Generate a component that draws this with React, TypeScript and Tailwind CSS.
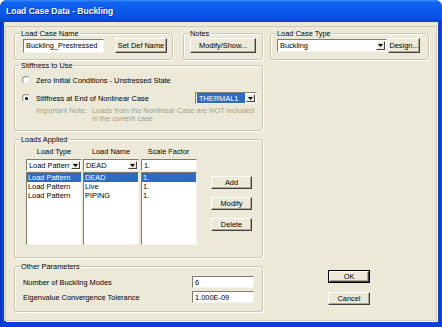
import React from "react";

function Arrow() {
  return (
    <svg width="5" height="3" viewBox="0 0 5 3" className="block">
      <path d="M0 0H5L2.5 3Z" fill="#000" />
    </svg>
  );
}

function Btn({
  children,
  className = "",
  def = false,
}: {
  children: React.ReactNode;
  className?: string;
  def?: boolean;
}) {
  const face = (
    <div className="flex h-full w-full items-center justify-center border border-t-white border-l-white border-r-[#404040] border-b-[#404040] bg-[#ECE9D8] shadow-[inset_-1px_-1px_0_#ACA899] whitespace-nowrap">
      {children}
    </div>
  );
  if (def) {
    return <div className={`border border-black ${className}`}>{face}</div>;
  }
  return <div className={className}>{face}</div>;
}

function Sunken({
  children,
  className = "",
}: {
  children?: React.ReactNode;
  className?: string;
}) {
  return (
    <div
      className={`border border-t-[#7F7D70] border-l-[#7F7D70] border-r-[#F4F3EE] border-b-[#F4F3EE] bg-white ${className}`}
    >
      {children}
    </div>
  );
}

function Combo({
  text,
  className = "",
  selected = false,
}: {
  text: string;
  className?: string;
  selected?: boolean;
}) {
  return (
    <Sunken className={`flex items-stretch overflow-hidden ${className}`}>
      <div className="flex min-w-0 flex-1 items-center overflow-hidden whitespace-nowrap pl-[1px]">
        <span
          className={
            selected
              ? "flex h-full flex-1 items-center bg-[#316AC5] pl-[2px] text-white"
              : "pl-[1px]"
          }
        >
          {text}
        </span>
      </div>
      <div className="my-[1px] mr-[1px] ml-[1px] flex w-[9px] items-center justify-center border border-t-white border-l-white border-r-[#404040] border-b-[#404040] bg-[#ECE9D8]">
        <Arrow />
      </div>
    </Sunken>
  );
}

function Group({
  label,
  className = "",
  children,
}: {
  label: string;
  className?: string;
  children?: React.ReactNode;
}) {
  return (
    <fieldset
      className={`m-0 min-w-0 rounded-[3px] border border-[#C9C6B3] p-0 shadow-[inset_1px_1px_0_#FFFFFF,1px_1px_0_#FFFFFF] ${className}`}
    >
      <legend className="ml-[5px] px-[1px] leading-[9px]">{label}</legend>
      {children}
    </fieldset>
  );
}

function Radio({ checked = false }: { checked?: boolean }) {
  return (
    <div className="flex h-[8px] w-[8px] items-center justify-center rounded-full border border-t-[#8A887A] border-l-[#8A887A] border-r-[#E2E0D4] border-b-[#E2E0D4] bg-white">
      {checked && <div className="h-[3px] w-[3px] rounded-full bg-black" />}
    </div>
  );
}

function ListBox({
  items,
  className = "",
}: {
  items: string[];
  className?: string;
}) {
  return (
    <Sunken className={`overflow-hidden ${className}`}>
      {items.map((t, i) => (
        <div
          key={i}
          className={`h-[9px] whitespace-nowrap pl-[1px] leading-[9px] ${
            i === 0 ? "bg-[#316AC5] text-white" : ""
          }`}
        >
          {t}
        </div>
      ))}
    </Sunken>
  );
}

export default function App() {
  return (
    <div className="h-[327px] w-[442px] overflow-hidden bg-white font-['Liberation_Sans',Arial,sans-serif] text-[7.4px] leading-[9px] text-black">
      <div className="flex h-full flex-col overflow-hidden rounded-t-[7px] bg-[#0A3FD8]">
        <div className="flex h-[22px] shrink-0 items-center bg-[linear-gradient(180deg,#3D8EFF_0%,#1366F2_10%,#0A5AEC_45%,#0853E4_80%,#0744CC_100%)] pl-[6px] text-[8.5px] font-bold text-white [text-shadow:1px_1px_0_#0A2A8A]">
          Load Case Data - Buckling
        </div>
        <div className="flex flex-1 bg-[linear-gradient(90deg,#0831C0_0px,#0A3FD8_2px)] px-[4px] pb-[6px]">
          <div className="flex flex-1 bg-[#ECE9D8] px-[1px] pt-[4px]">
            <div className="flex-1 border border-[#D0CDB9] pl-[8px] pt-[2px] shadow-[1px_1px_0_#FFFFFF]">
              {/* Row 1 */}
              <div className="flex items-start">
                <Group label="Load Case Name" className="h-[31px] w-[159px]">
                  <div className="flex items-center pl-[8px]">
                    <Sunken className="flex h-[14px] w-[81px] items-center pl-[2px]">
                      Buckling_Prestressed
                    </Sunken>
                    <Btn className="ml-[11px] h-[15px] w-[52px]">Set Def Name</Btn>
                  </div>
                </Group>
                <Group label="Notes" className="ml-[10px] h-[31px] w-[80px]">
                  <div className="flex items-center pl-[6px]">
                    <Btn className="h-[15px] w-[66px]">Modify/Show...</Btn>
                  </div>
                </Group>
                <Group label="Load Case Type" className="ml-[7px] h-[31px] w-[159px]">
                  <div className="flex items-center pl-[6px]">
                    <Combo text="Buckling" className="h-[13px] w-[110px]" />
                    <Btn className="ml-[1px] h-[15px] w-[32px]">Design...</Btn>
                  </div>
                </Group>
              </div>

              {/* Lower area */}
              <div className="flex">
                <div className="mt-[1px] flex w-[249px] flex-col">
                  <Group label="Stiffness to Use" className="h-[70px]">
                    <div className="flex flex-col pl-[7px]">
                      <div className="mt-[4px] flex h-[12px] items-center">
                        <Radio />
                        <span className="ml-[6px]">
                          Zero Initial Conditions - Unstressed State
                        </span>
                      </div>
                      <div className="mt-[6px] flex h-[12px] items-center">
                        <Radio checked />
                        <span className="ml-[6px]">
                          Stiffness at End of Nonlinear Case
                        </span>
                        <Combo
                          text="THERMAL1"
                          selected
                          className="mr-[5px] ml-auto h-[12px] w-[62px]"
                        />
                      </div>
                      <div className="mt-[3px] flex pl-[14px] leading-[8px] text-[#A3A08E]">
                        <span className="w-[56px] shrink-0">Important Note:</span>
                        <span>
                          Loads from the Nonlinear Case are NOT included
                          <br />
                          in the current case
                        </span>
                      </div>
                    </div>
                  </Group>

                  <Group label="Loads Applied" className="mt-[4px] h-[123px]">
                    <div className="flex pl-[11px]">
                      <div className="flex flex-col">
                        <div className="mt-[3px] grid h-[9px] grid-cols-[56px_56px_56px] gap-x-[1px]">
                          <div className="text-center">Load Type</div>
                          <div className="text-center">Load Name</div>
                          <div className="ml-[1px] text-center">Scale Factor</div>
                        </div>
                        <div className="mt-[3px] flex">
                          <Combo text="Load Pattern" className="h-[12px] w-[56px]" />
                          <Combo text="DEAD" className="ml-[1px] h-[12px] w-[56px]" />
                          <Sunken className="ml-[2px] flex h-[12px] w-[56px] items-center pl-[2px]">
                            1.
                          </Sunken>
                        </div>
                        <div className="mt-[1px] flex">
                          <ListBox
                            items={["Load Pattern", "Load Pattern", "Load Pattern"]}
                            className="h-[73px] w-[56px]"
                          />
                          <ListBox
                            items={["DEAD", "Live", "PIPING"]}
                            className="ml-[1px] h-[73px] w-[56px]"
                          />
                          <ListBox
                            items={["1.", "1.", "1."]}
                            className="ml-[2px] h-[73px] w-[56px]"
                          />
                        </div>
                      </div>
                      <div className="ml-[14px] flex flex-col gap-[8px] pt-[32px]">
                        <Btn className="h-[13px] w-[41px]">Add</Btn>
                        <Btn className="h-[13px] w-[41px]">Modify</Btn>
                        <Btn className="h-[13px] w-[41px]">Delete</Btn>
                      </div>
                    </div>
                  </Group>

                  <Group label="Other Parameters" className="mt-[4px] h-[50px]">
                    <div className="flex flex-col pl-[8px]">
                      <div className="mt-[5px] flex h-[12px] items-center">
                        <span className="w-[169px]">Number of Buckling Modes</span>
                        <Sunken className="flex h-[12px] w-[62px] items-center pl-[2px]">
                          6
                        </Sunken>
                      </div>
                      <div className="mt-[3px] flex h-[12px] items-center">
                        <span className="w-[169px]">
                          Eigenvalue Convergence Tolerance
                        </span>
                        <Sunken className="flex h-[12px] w-[62px] items-center pl-[2px]">
                          1.000E-09
                        </Sunken>
                      </div>
                    </div>
                  </Group>
                </div>

                <div className="ml-[65px] flex flex-col pt-[210px]">
                  <Btn def className="h-[13px] w-[42px]">
                    OK
                  </Btn>
                  <Btn className="mt-[9px] h-[13px] w-[42px]">Cancel</Btn>
                </div>
              </div>
            </div>
          </div>
        </div>
      </div>
    </div>
  );
}
